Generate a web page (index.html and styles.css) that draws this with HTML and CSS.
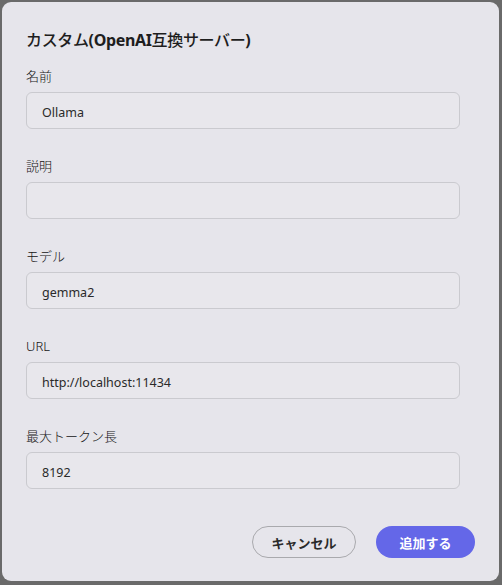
FILE: index.html
```html
<!DOCTYPE html>
<html lang="ja">
<head>
<meta charset="utf-8">
<link rel="stylesheet" href="styles.css">
</head>
<body>
<div class="dialog">
  <h1 class="title">カスタム<span class="title-strong">(OpenAI</span>互換サーバー<span class="title-strong">)</span></h1>
  <div class="fields">
    <div class="field">
      <label class="label">名前</label>
      <div class="input">Ollama</div>
    </div>
    <div class="field">
      <label class="label">説明</label>
      <div class="input"></div>
    </div>
    <div class="field">
      <label class="label">モデル</label>
      <div class="input">gemma2</div>
    </div>
    <div class="field">
      <label class="label">URL</label>
      <div class="input">http://localhost:11434</div>
    </div>
    <div class="field">
      <label class="label">最大トークン長</label>
      <div class="input">8192</div>
    </div>
  </div>
  <div class="actions">
    <button class="btn btn-cancel">キャンセル</button>
    <button class="btn btn-primary">追加する</button>
  </div>
</div>
</body>
</html>
```
FILE: styles.css
```css
html, body {
  margin: 0;
  padding: 0;
  background: #6a6a6a;
  width: 502px;
  height: 585px;
  overflow: hidden;
}
body {
  font-family: "Noto Sans", "Noto Sans CJK JP", sans-serif;
  color: #222;
}
.dialog {
  margin: 2px 0 0 2px;
  width: 497px;
  height: 579px;
  box-sizing: border-box;
  background: #e6e5eb;
  border-radius: 9px;
  padding: 24px 39px 0 24px;
  display: flex;
  flex-direction: column;
}
.title {
  margin: 0;
  font-size: 16px;
  font-weight: 500;
  line-height: 28px;
  color: #1e1e1e;
  letter-spacing: -0.35px;
}
.title-strong {
  font-weight: 700;
}
.fields {
  margin-top: 12px;
  display: flex;
  flex-direction: column;
  gap: 27px;
}
.field {
  display: flex;
  flex-direction: column;
}
.label {
  font-size: 13px;
  font-weight: 300;
  line-height: 20px;
  color: #141414;
  margin-bottom: 6px;
}
.input {
  height: 37px;
  box-sizing: border-box;
  border: 1px solid #cacacf;
  border-radius: 6px;
  background: #e8e7ec;
  font-size: 12.5px;
  line-height: 35px;
  padding: 2px 15px 0;
  color: #2a2a2a;
}
.actions {
  margin-top: 37px;
  margin-right: -15px;
  display: flex;
  justify-content: flex-end;
  gap: 20px;
}
.btn {
  height: 32px;
  border-radius: 16px;
  font-family: "Noto Sans CJK JP", "Noto Sans", sans-serif;
  font-size: 13px;
  font-weight: 700;
  padding: 0;
  cursor: pointer;
}
.btn-cancel {
  width: 104px;
  background: transparent;
  border: 1px solid #a9a9ad;
  color: #2a2a2a;
}
.btn-primary {
  width: 99px;
  background: #6467e8;
  border: none;
  color: #ffffff;
}
```
